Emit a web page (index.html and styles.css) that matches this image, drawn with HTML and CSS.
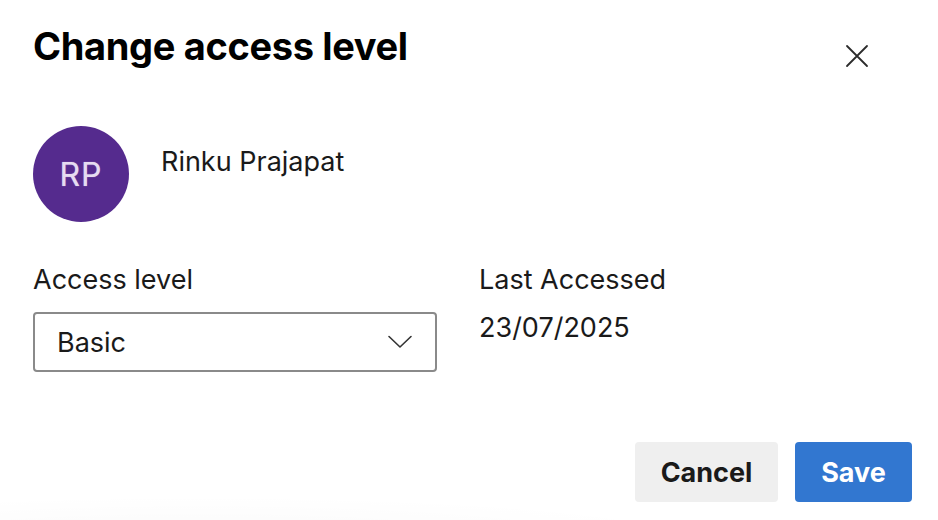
FILE: index.html
```html
<!DOCTYPE html>
<html lang="en">
<head>
    <meta charset="UTF-8">
    <meta name="viewport" content="width=device-width, initial-scale=1.0">
    <title>Change access level</title>
    <link rel="stylesheet" href="styles.css">
</head>
<body>
    <div class="dialog">
        <div class="header">
            <h1>Change access level</h1>
            <button class="close" aria-label="Close">
                <svg width="24" height="24" viewBox="0 0 24 24">
                    <path d="M2 2 L22 22 M22 2 L2 22" stroke="#2b2b2b" stroke-width="1.8" fill="none" stroke-linecap="round"/>
                </svg>
            </button>
        </div>

        <div class="user">
            <div class="avatar">RP</div>
            <div class="name">Rinku Prajapat</div>
        </div>

        <div class="fields">
            <div class="field field-select">
                <label for="accessLevel">Access level</label>
                <div class="select" id="accessLevel">
                    <span>Basic</span>
                    <svg width="26" height="14" viewBox="0 0 26 14">
                        <path d="M2 1.5 L13 12 L24 1.5" stroke="#333" stroke-width="1.6" fill="none" stroke-linecap="round" stroke-linejoin="round"/>
                    </svg>
                </div>
            </div>
            <div class="field">
                <div class="label">Last Accessed</div>
                <div class="value">23/07/2025</div>
            </div>
        </div>

        <div class="actions">
            <button class="btn btn-cancel">Cancel</button>
            <button class="btn btn-save">Save</button>
        </div>
    </div>
</body>
</html>
```

FILE: styles.css
```css
body {
    margin: 0;
    font-family: Inter, "Noto Sans", sans-serif;
    color: #1a1a1a;
    background-color: #fff;
}
.dialog {
    min-height: 520px;
    box-sizing: border-box;
    padding: 24px 26px 0 33px;
    background: radial-gradient(ellipse 520px 45px at 200px 540px, rgba(0, 0, 0, 0.025), rgba(0, 0, 0, 0));
}
.header {
    display: flex;
    justify-content: space-between;
    align-items: flex-start;
}
h1 {
    margin: 0;
    font-size: 38px;
    line-height: 44px;
    font-weight: 700;
    letter-spacing: -0.35px;
    color: #000;
}
.close {
    margin: 10px 33px 0 0;
    width: 44px;
    height: 44px;
    padding: 10px;
    border: none;
    background: none;
    display: flex;
    align-items: center;
    justify-content: center;
    cursor: pointer;
}
.user {
    display: flex;
    align-items: flex-start;
    gap: 32px;
    margin-top: 48px;
}
.avatar {
    width: 96px;
    height: 96px;
    border-radius: 50%;
    background-color: #552b8e;
    color: #e6dcf1;
    font-size: 32px;
    display: flex;
    align-items: center;
    justify-content: center;
    letter-spacing: 1px;
    text-shadow: 0 0 1px rgba(230, 220, 241, 0.7);
}
.name {
    margin-top: 21px;
    font-size: 27px;
    line-height: 30px;
}
.fields {
    display: flex;
    gap: 42px;
    margin-top: 42px;
}
.field-select {
    width: 404px;
}
.field label,
.field .label {
    display: block;
    font-size: 27px;
    line-height: 32px;
}
.select {
    margin-top: 16px;
    height: 60px;
    box-sizing: border-box;
    border: 2px solid #8a8a8a;
    border-radius: 4px;
    padding: 0 22px 0 22px;
    display: flex;
    align-items: center;
    justify-content: space-between;
    font-size: 27px;
}
.value {
    margin-top: 16px;
    font-size: 27px;
    line-height: 32px;
}
.actions {
    display: flex;
    justify-content: flex-end;
    gap: 17px;
    margin-top: 70px;
}
.btn {
    height: 60px;
    border: none;
    border-radius: 4px;
    font-family: Inter, "Noto Sans", sans-serif;
    font-size: 27px;
    font-weight: 700;
    cursor: pointer;
}
.btn-cancel {
    width: 143px;
    background-color: #efefef;
    color: #1a1a1a;
}
.btn-save {
    width: 117px;
    background-color: #3277d0;
    color: #fff;
}
```
